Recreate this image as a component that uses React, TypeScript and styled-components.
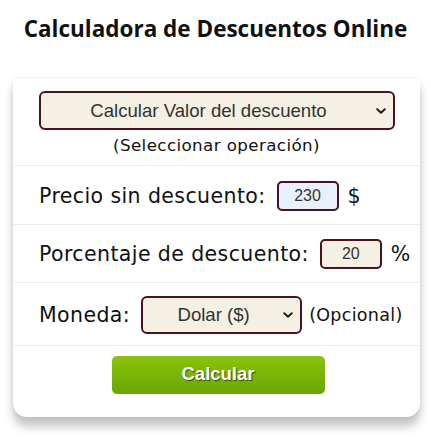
import React from "react";
import styled, { createGlobalStyle } from "styled-components";

const Global = createGlobalStyle`
  html, body { margin: 0; padding: 0; background: #fff; }
  body { font-family: "DejaVu Sans", Verdana, sans-serif; color: #111; }
`;

const Page = styled.div`
  width: 431px;
  padding-bottom: 20px;
`;

const Title = styled.h1`
  margin: 0;
  padding: 13px 0 0;
  height: 79px;
  box-sizing: border-box;
  text-align: center;
  font-family: "Open Sans", sans-serif;
  font-weight: 700;
  font-size: 22.5px;
  line-height: 32px;
  color: #111;
`;

const Card = styled.div`
  margin: 0 11px 0 13px;
  background: #fff;
  border-radius: 0 0 14px 14px;
  box-shadow: 0 10px 10px rgba(0, 0, 0, 0.22), 0 0 6px rgba(0, 0, 0, 0.08);
  padding-bottom: 23px;
`;

const Section = styled.div<{ $h: number }>`
  height: ${(p) => p.$h}px;
  border-bottom: 1px solid #ececec;
  display: flex;
  align-items: center;
  padding-left: 26px;
  padding-top: 1px;
  box-sizing: border-box;
  gap: 11px;
  font-size: 20.5px;
  letter-spacing: 0.4px;
`;

const TopSection = styled.div`
  height: 87px;
  border-bottom: 1px solid #ececec;
  display: flex;
  flex-direction: column;
  align-items: center;
  padding-top: 12px;
  box-sizing: border-box;
`;

const Caption = styled.div`
  margin-top: 4px;
  font-size: 16.7px;
  letter-spacing: 0.4px;
  line-height: 22px;
  color: #111;
`;

const SelectWrap = styled.div<{ $w: number; $h: number }>`
  position: relative;
  width: ${(p) => p.$w}px;
  height: ${(p) => p.$h}px;
  flex: none;
`;

const Select = styled.select`
  appearance: none;
  -webkit-appearance: none;
  width: 100%;
  height: 100%;
  box-sizing: border-box;
  border: 2px solid #4b1322;
  border-radius: 6px;
  background: #f4f0e4;
  font-family: "Liberation Sans", Arial, sans-serif;
  font-size: 18.6px;
  color: #333;
  text-align: center;
  text-align-last: center;
  padding: 0 22px 0 6px;
  outline: none;
`;

const Chevron = styled.svg`
  position: absolute;
  right: 9px;
  top: 50%;
  margin-top: -3px;
  width: 10px;
  height: 6px;
  pointer-events: none;
`;

const NumInput = styled.input<{ $bg: string }>`
  width: 62px;
  height: 30px;
  box-sizing: border-box;
  border: 2px solid #4b1322;
  border-radius: 5px;
  background: ${(p) => p.$bg};
  font-family: "Liberation Sans", Arial, sans-serif;
  font-size: 16px;
  color: #333;
  text-align: center;
  padding: 0;
  outline: none;
  flex: none;
`;

const Unit = styled.span`
  font-size: 20.5px;
  margin-left: -2px;
`;

const Note = styled.span`
  font-size: 17.5px;
  letter-spacing: 0.3px;
  margin-left: -4px;
`;

const ButtonRow = styled.div`
  display: flex;
  justify-content: center;
  padding-top: 10px;
  padding-left: 3px;
`;

const Button = styled.button`
  width: 213px;
  height: 38px;
  border: none;
  border-radius: 5px;
  background: linear-gradient(#8ac40c, #6aa500);
  color: #fff;
  font-family: "Liberation Sans", Arial, sans-serif;
  font-weight: 700;
  font-size: 18.5px;
  text-shadow: 1px 1px 1px rgba(0, 0, 0, 0.55);
  padding: 0 0 3px;
  cursor: pointer;
`;

function Arrow() {
  return (
    <Chevron viewBox="0 0 10 6">
      <path d="M1.2 1.2 L5 4.8 L8.8 1.2" fill="none" stroke="#222" strokeWidth="2" strokeLinecap="round" strokeLinejoin="round" />
    </Chevron>
  );
}

export default function App() {
  return (
    <Page>
      <Global />
      <Title>Calculadora de Descuentos Online</Title>
      <Card>
        <TopSection>
          <SelectWrap $w={356} $h={39}>
            <Select defaultValue="valor">
              <option value="valor">Calcular Valor del descuento</option>
              <option value="precio">Calcular Precio con descuento</option>
              <option value="porcentaje">Calcular Porcentaje de descuento</option>
            </Select>
            <Arrow />
          </SelectWrap>
          <Caption>(Seleccionar operación)</Caption>
        </TopSection>
        <Section $h={59}>
          <span>Precio sin descuento:</span>
          <NumInput $bg="#e8f0fe" defaultValue="230" />
          <Unit>$</Unit>
        </Section>
        <Section $h={58}>
          <span>Porcentaje de descuento:</span>
          <NumInput $bg="#f4f0e4" defaultValue="20" />
          <Unit>%</Unit>
        </Section>
        <Section $h={63}>
          <span>Moneda:</span>
          <SelectWrap $w={161} $h={38}>
            <Select defaultValue="usd">
              <option value="usd">Dolar ($)</option>
              <option value="eur">Euro (€)</option>
            </Select>
            <Arrow />
          </SelectWrap>
          <Note>(Opcional)</Note>
        </Section>
        <ButtonRow>
          <Button>Calcular</Button>
        </ButtonRow>
      </Card>
    </Page>
  );
}
